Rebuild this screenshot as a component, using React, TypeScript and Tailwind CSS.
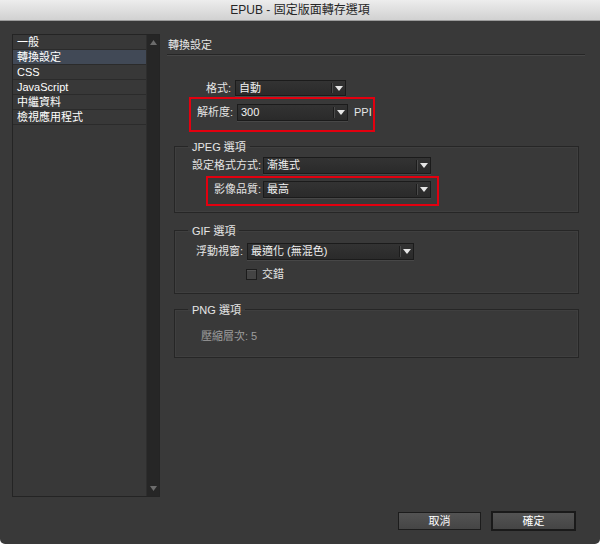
import type { ReactNode } from "react";

const FONT = "font-['Liberation_Sans','Noto_Sans_CJK_TC',sans-serif]";

function Caret() {
    return (
        <svg width="8" height="5" viewBox="0 0 8 5" className="block">
            <path d="M0 0H8L4 5Z" fill="#e6e6e6" />
        </svg>
    );
}

function Dropdown({ value, width, height = "h-[17px]" }: { value: string; width: string; height?: string }) {
    return (
        <div
            className={`${width} ${height} flex items-stretch border border-[#1b1b1b] bg-gradient-to-b from-[#333333] to-[#2a2a2a] shadow-[0_1px_0_#474747]`}
        >
            <span className="flex-1 pl-[3px] text-[11px] leading-[15px] text-[#f2f2f2]">{value}</span>
            <span className="w-[1px] my-[2px] bg-[#1c1c1c]" />
            <span className="w-[1px] my-[2px] bg-[#4a4a4a]" />
            <span className="w-[12px] flex items-center justify-center">
                <Caret />
            </span>
        </div>
    );
}

function Group({ title, className, children }: { title: string; className: string; children: ReactNode }) {
    return (
        <fieldset
            className={`ml-[7px] w-[405px] border border-[#262626] shadow-[inset_0_0_0_1px_#3f3f3f] ${className}`}
        >
            <legend className="ml-[13px] px-[4px] text-[11px] leading-[12px] text-[#e6e6e6]">{title}</legend>
            {children}
        </fieldset>
    );
}

export default function App() {
    const items = ["一般", "轉換設定", "CSS", "JavaScript", "中繼資料", "檢視應用程式"];

    return (
        <div className="bg-white w-[600px] h-[544px]">
            <div
                className={`w-[600px] h-[544px] bg-[#393939] flex flex-col overflow-hidden rounded-b-[5px] ${FONT} text-[11px] text-[#e4e4e4]`}
            >
                {/* title bar */}
                <div className="h-[21px] shrink-0 flex items-center justify-center bg-gradient-to-b from-[#ededed] to-[#d1d1d1] border-b border-[#9c9c9c]">
                    <span className="text-[12px] leading-[16px] text-[#262626]">EPUB - 固定版面轉存選項</span>
                </div>

                <div className="flex pt-[13px] pl-[12px]">
                    {/* sidebar */}
                    <div className="w-[148px] h-[463px] flex border border-[#242424]">
                        <div className="flex-1 bg-[#383838]">
                            {items.map((item, i) => (
                                <div
                                    key={item}
                                    className={`h-[15px] leading-[15px] pl-[4px] border-b border-[#2b2b2b] text-white ${
                                        i === 1 ? "bg-[#414956]" : ""
                                    }`}
                                >
                                    {item}
                                </div>
                            ))}
                        </div>
                        <div className="w-[13px] bg-[#262626] border-l border-[#2e2e2e] flex flex-col justify-between items-center py-[5px]">
                            <svg width="7" height="5" viewBox="0 0 7 5">
                                <path d="M0 5H7L3.5 0Z" fill="#6c6c6c" />
                            </svg>
                            <svg width="7" height="5" viewBox="0 0 7 5">
                                <path d="M0 0H7L3.5 5Z" fill="#6c6c6c" />
                            </svg>
                        </div>
                    </div>

                    {/* settings panel */}
                    <div className="ml-[7px] w-[418px] flex flex-col">
                        <div className="h-[21px] pt-[4px] pl-[1px] leading-[14px] text-[#e6e6e6] border-b border-[#262626] shadow-[0_1px_0_#464646]">
                            轉換設定
                        </div>

                        <div className="mt-[25px] flex items-center">
                            <span className="w-[64px] text-right">格式:</span>
                            <span className="ml-[4px]">
                                <Dropdown value="自動" width="w-[111px]" height="h-[16px]" />
                            </span>
                        </div>

                        <div className="mt-[0px] ml-[22px] w-[186px] h-[35px] border-2 border-[#e3000f] pt-[5px] flex items-start">
                            <span className="w-[42px] text-right leading-[17px]">解析度:</span>
                            <span className="ml-[4px]">
                                <Dropdown value="300" width="w-[111px]" />
                            </span>
                            <span className="ml-[6px] leading-[17px]">PPI</span>
                        </div>

                        <Group title="JPEG 選項" className="mt-[9px] pb-[6px]">
                            <div className="mt-[4px] flex items-center">
                                <span className="w-[86px] text-right">設定格式方式:</span>
                                <span className="ml-[2px]">
                                    <Dropdown value="漸進式" width="w-[168px]" />
                                </span>
                            </div>
                            <div className="mt-[2px] ml-[31px] w-[233px] h-[30px] border-2 border-[#e3000f] pt-[3px] flex items-start">
                                <span className="w-[53px] text-right leading-[17px]">影像品質:</span>
                                <span className="ml-[2px]">
                                    <Dropdown value="最高" width="w-[168px]" />
                                </span>
                            </div>
                        </Group>

                        <Group title="GIF 選項" className="mt-[12px] pb-[11px]">
                            <div className="mt-[6px] flex items-center">
                                <span className="w-[68px] text-right">浮動視窗:</span>
                                <span className="ml-[4px]">
                                    <Dropdown value="最適化 (無混色)" width="w-[167px]" />
                                </span>
                            </div>
                            <div className="mt-[8px] ml-[71px] flex items-center h-[14px]">
                                <span className="w-[11px] h-[11px] border border-[#1c1c1c] bg-[#444444] shadow-[inset_0_1px_0_#555555]" />
                                <span className="ml-[5px]">交錯</span>
                            </div>
                        </Group>

                        <Group title="PNG 選項" className="mt-[10px] pb-[14px]">
                            <div className="mt-[13px] ml-[26px] leading-[14px] text-[#9d9d9d]">壓縮層次: 5</div>
                        </Group>
                    </div>
                </div>

                {/* buttons */}
                <div className="mt-[14px] flex justify-end items-center pr-[24px] gap-[10px]">
                    <button className="w-[83px] h-[18px] border border-[#1c1c1c] bg-gradient-to-b from-[#535353] to-[#454545] text-[11px] leading-[14px] text-white">
                        取消
                    </button>
                    <button className="w-[85px] h-[20px] border-2 border-[#1a1a1a] bg-gradient-to-b from-[#535353] to-[#454545] text-[11px] leading-[14px] text-white">
                        確定
                    </button>
                </div>
            </div>
        </div>
    );
}
